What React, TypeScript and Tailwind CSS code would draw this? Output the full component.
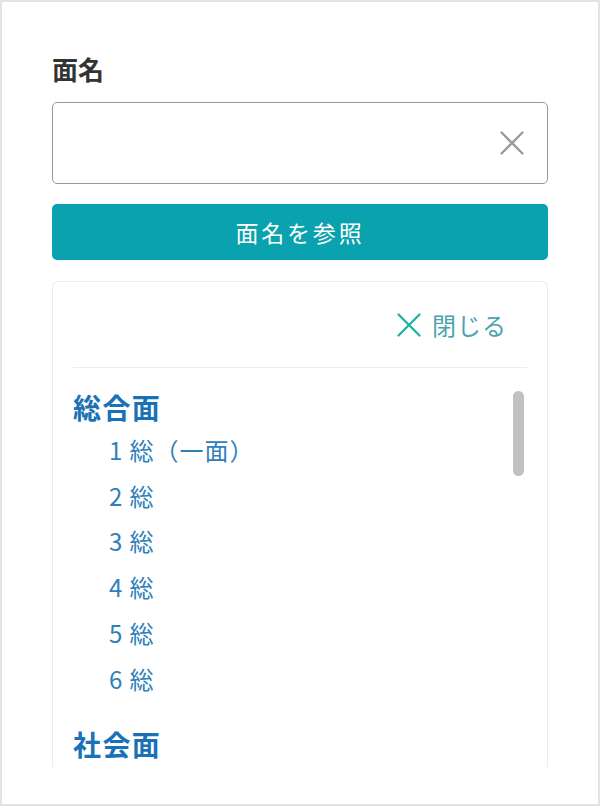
import { useState } from 'react';

const sections = [
    { title: '総合面', items: ['1 総（一面）', '2 総', '3 総', '4 総', '5 総', '6 総'] },
    { title: '社会面', items: [] as string[] },
];

const CrossIcon = ({ className }: { className?: string }) => (
    <svg viewBox="0 0 24 24" className={className} fill="none" stroke="currentColor" strokeWidth="2" strokeLinecap="round">
        <path d="M3 3 L21 21 M21 3 L3 21" />
    </svg>
);

const App = () => {
    const [name, setName] = useState('');

    return (
        <div
            className="w-[600px] h-[806px] bg-white border-2 border-[#e3e3e3] px-[50px] pt-[46px] overflow-hidden"
            style={{ fontFamily: '"Noto Sans CJK JP", "Noto Sans", sans-serif' }}
        >
            <label className="block text-[26px] font-bold leading-[42px] text-[#333]">面名</label>

            <div className="mt-[12px] relative h-[82px] rounded-[5px] border border-[#9a9a9a] bg-white">
                <input
                    type="text"
                    value={name}
                    onChange={e => setName(e.target.value)}
                    className="w-full h-full bg-transparent px-4 pr-14 text-[20px] text-[#333] focus:outline-none"
                />
                <button className="absolute right-[21px] top-1/2 -translate-y-1/2 text-[#9a9a9a]" onClick={() => setName('')}>
                    <CrossIcon className="w-[28px] h-[28px]" />
                </button>
            </div>

            <button className="mt-[20px] w-full h-[56px] rounded-[5px] bg-[#0aa2ae] text-white text-[23px] tracking-[0.12em] leading-none">
                面名を参照
            </button>

            <div className="mt-[21px] h-[486px] rounded-t-[6px] border border-b-0 border-[#ececec] px-[20px] overflow-hidden">
                <div className="h-[86px] flex items-center justify-end border-b border-[#ececec] pr-[20px]">
                    <button className="flex items-center gap-[9px] text-[#4aa5ae] text-[24px] tracking-[0.04em]">
                        <CrossIcon className="w-[28px] h-[28px] text-[#1fb3a3]" />
                        閉じる
                    </button>
                </div>

                <div className="relative pt-[19px]">
                    <div className="absolute right-[3px] top-[23px] w-[11px] h-[85px] rounded-full bg-[#c1c1c1]" />
                    {sections.map(section => (
                        <div key={section.title} className="mb-[23px]">
                            <div className="text-[28px] font-bold leading-[40px] text-[#1a72b6] tracking-[0.05em]">{section.title}</div>
                            <ul className="pl-[36px]">
                                {section.items.map(item => (
                                    <li key={item} className="text-[24px] leading-[45.7px] text-[#2f80b9] tracking-[0.04em]">{item}</li>
                                ))}
                            </ul>
                        </div>
                    ))}
                </div>
            </div>
        </div>
    );
};

export default App;
